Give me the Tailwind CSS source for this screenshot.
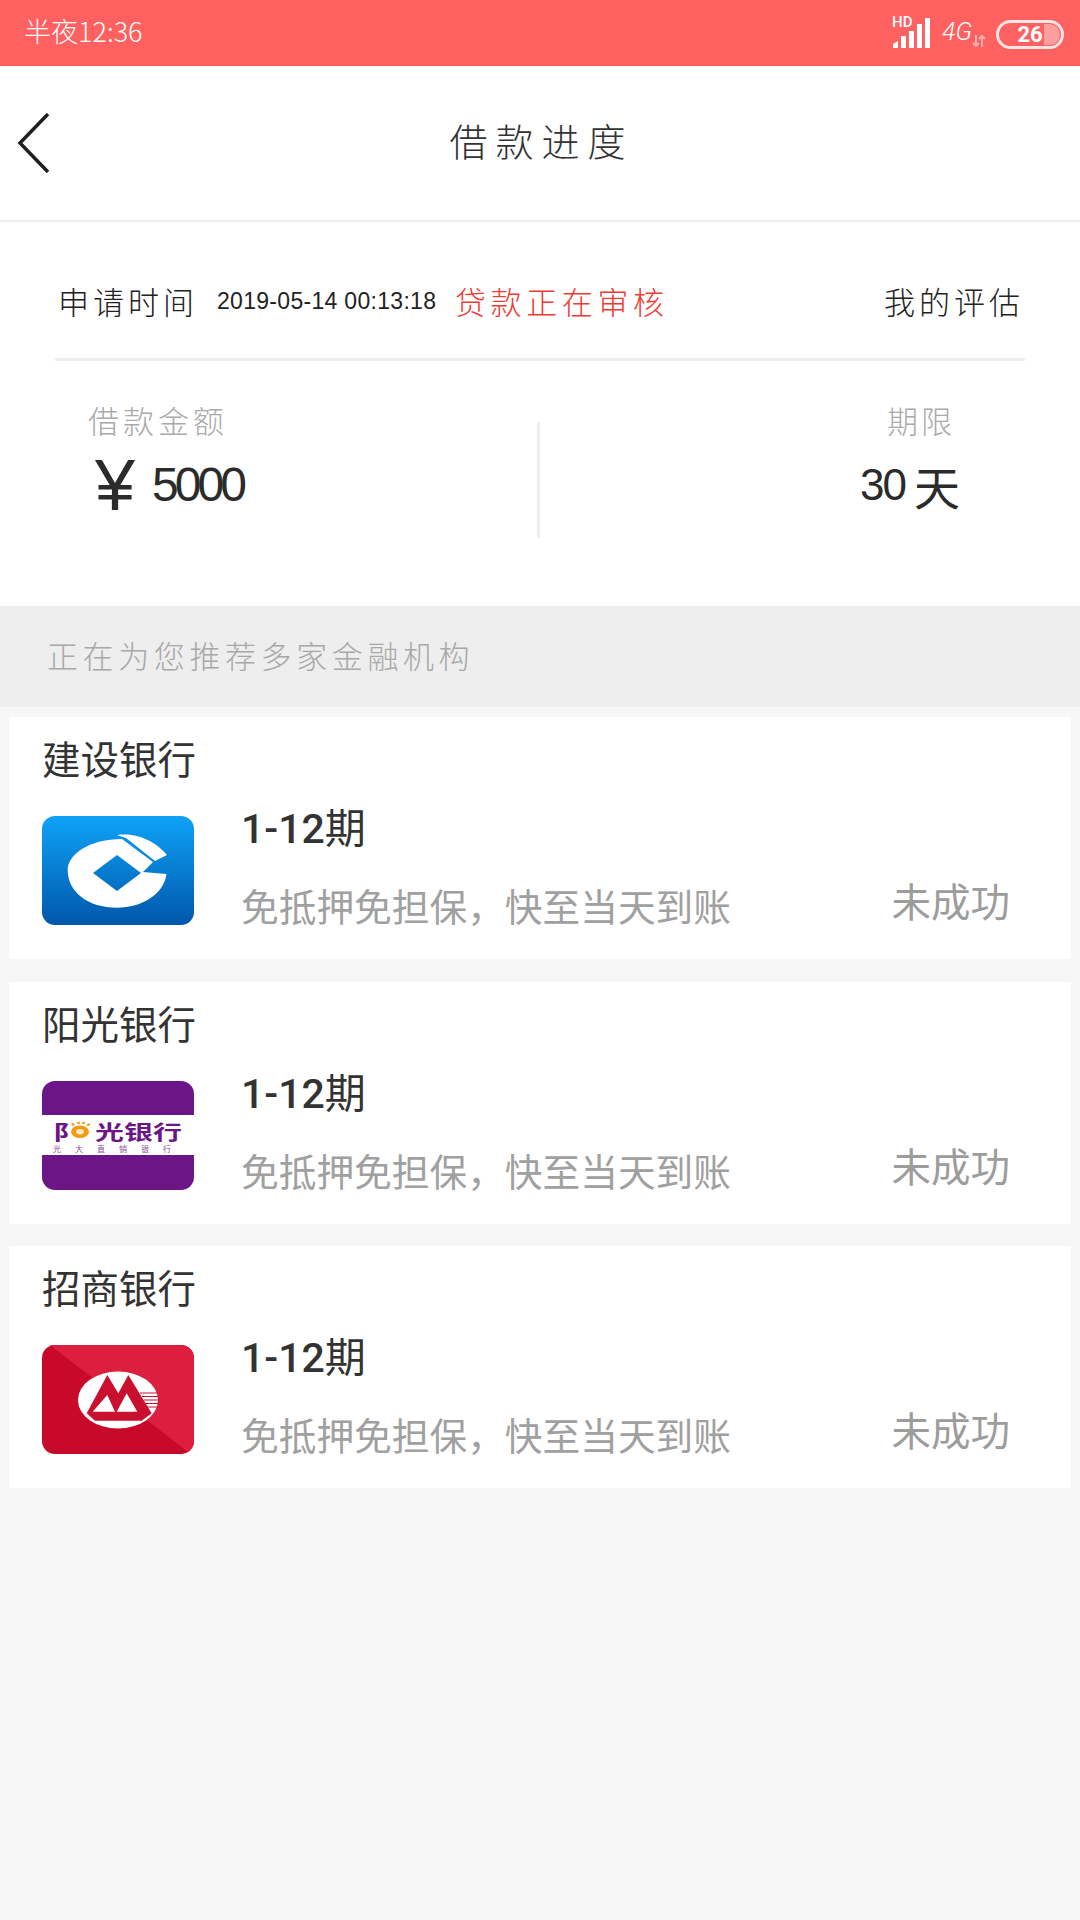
<!DOCTYPE html>
<html lang="zh-CN">
<head>
    <meta charset="UTF-8">
    <meta name="viewport" content="width=device-width, initial-scale=1.0">
    <title>借款进度</title>
    <script src="https://cdn.jsdelivr.net/npm/@tailwindcss/browser@4"></script>
</head>
<body class="bg-[#f6f6f6] font-['Roboto','Noto_Sans_CJK_SC',sans-serif]">
<div class="w-[1080px] h-[1920px] overflow-hidden">
    <!-- Status bar -->
    <div class="h-[66px] bg-[#ff6060] flex items-center pl-[24px] text-white">
        <span class="mt-[-4px] text-[27px] font-light font-['Noto_Sans_CJK_SC',sans-serif]">半夜12:36</span>
        <div class="ml-auto flex items-end h-[66px] pb-[18px]">
            <div class="relative w-[40px] h-[30px]">
                <span class="absolute left-0 top-[-3px] text-[15px] leading-[14px] font-medium">HD</span>
                <svg width="40" height="30" viewBox="0 0 40 30" fill="white">
                    <path d="M1 30V26L6 23V30Z"/><rect x="9" y="18" width="5" height="12"/><rect x="17" y="13" width="5" height="17" /><rect x="25" y="6" width="5" height="24"/><rect x="33" y="0" width="5" height="30"/>
                </svg>
            </div>
            <span class="ml-[10px] w-[30px] text-[25px] leading-[24px] italic font-light mb-[4px]">4G</span>
            <svg class="ml-[1px] mb-[1px] opacity-50" width="12" height="12" viewBox="0 0 12 12" fill="none" stroke="white" stroke-width="2">
                <path d="M3 0V11M0 8L3 11L6 8"/><path d="M9 12V1M6 4L9 1L12 4"/>
            </svg>
            <div class="ml-[11px] mb-[-1px] w-[68px] h-[29px] rounded-full border-[3px] border-[#ffe6e6] relative flex items-center justify-center">
                <span class="text-[22px] font-bold leading-none">26</span>
                <span class="absolute right-[1px] top-[1px] w-[16px] h-[21px] bg-white/40 rounded-r-full"></span>
            </div>
        </div>
        <div class="w-[16px]"></div>
    </div>

    <!-- Header -->
    <div class="h-[156px] bg-white border-b-2 border-[#eeeeee] grid grid-cols-[1fr_auto_1fr] items-center">
        <svg class="ml-[17px]" width="34" height="60" viewBox="0 0 34 60" fill="none" stroke="#1f1f1f" stroke-width="3.5">
            <path d="M31 1L3 30L31 59"/>
        </svg>
        <h1 class="ml-[3px] text-[38px] tracking-[8px] text-[#333333] font-light mt-[-8px] font-['Noto_Sans_CJK_SC',sans-serif]">借款进度</h1>
        <div></div>
    </div>

    <!-- Loan info -->
    <div class="h-[384px] bg-white">
        <div class="mx-[55px] h-[139px] pt-[22px] border-b-[3px] border-[#eeeeee] flex items-center text-[#222222] font-['Noto_Sans_CJK_SC',sans-serif] font-light">
            <span class="ml-[3px] w-[141px] text-[31px] tracking-[4px]">申请时间</span>
            <span class="ml-[18px] w-[238px] text-[23px] font-['Liberation_Sans',sans-serif] tracking-[0.3px]">2019-05-14 00:13:18</span>
            <span class="text-[31px] tracking-[4.6px] text-[#ee3b33]">贷款正在审核</span>
            <span class="ml-auto mr-[1px] text-[31px] tracking-[4px]">我的评估</span>
        </div>
        <div class="flex h-[242px]">
            <div class="w-[537px] pl-[88px]">
                <p class="mt-[37px] h-[44px] leading-[44px] text-[31px] tracking-[4px] text-[#aaaaaa] font-light font-['Noto_Sans_CJK_SC',sans-serif]">借款金额</p>
                <p class="mt-[13px] ml-[7px] flex items-center h-[60px] text-[#2b2b2b] font-['Liberation_Sans',sans-serif]">
                    <span class="text-[72px] leading-[60px]">¥</span>
                    <span class="ml-[17px] text-[48px] leading-[60px] tracking-[-4px]">5000</span>
                </p>
            </div>
            <div class="w-[3px] h-[116px] mt-[61px] bg-[#eeeeee]"></div>
            <div class="flex-1">
                <p class="mt-[37px] ml-[347px] h-[44px] leading-[44px] text-[31px] tracking-[3px] text-[#aaaaaa] font-light font-['Noto_Sans_CJK_SC',sans-serif]">期限</p>
                <p class="mt-[13px] ml-[320px] flex items-center h-[60px] text-[#2b2b2b] font-['Liberation_Sans',sans-serif]">
                    <span class="text-[44px] leading-[60px] tracking-[-2px]">30</span>
                    <span class="ml-[9px] text-[46px] leading-[60px] font-['Noto_Sans_CJK_SC',sans-serif]">天</span>
                </p>
            </div>
        </div>
    </div>

    <!-- Recommendation banner -->
    <div class="h-[101px] bg-[#eeeeee] pl-[47px] leading-[98px] text-[31px] tracking-[4.6px] text-[#a8a8a8] font-light font-['Noto_Sans_CJK_SC',sans-serif]">正在为您推荐多家金融机构</div>

    <!-- Banks -->
    <div class="mt-[10px] mx-[9px] flex flex-col gap-[22.5px]">
        <div class="h-[242px] bg-white">
            <h3 class="h-[85px] pl-[33px] leading-[88px] text-[38.5px] text-[#333333]">建设银行</h3>
            <div class="flex">
                <svg class="mt-[14px] ml-[33px] shrink-0" width="152" height="109" viewBox="0 0 152 109">
                    <defs>
                        <linearGradient id="ccb" x1="0" y1="0" x2="0" y2="1">
                            <stop offset="0" stop-color="#0ea2f7"/>
                            <stop offset="1" stop-color="#0057aa"/>
                        </linearGradient>
                    </defs>
                    <rect width="152" height="109" rx="13" fill="url(#ccb)"/>
                    <path fill="white" fill-rule="evenodd" d="M80 23L111 46L101 56L124.5 58C122 78 100 91.7 75 91.7C46 91.7 25.7 76 25.7 54C25.7 38 48 23 80 23ZM51 57L75 39L99 57L75 75Z"/>
                    <path fill="white" d="M75 19C97 16 115 27 125 39L113 45L84 22Z"/>
                </svg>
                <div class="ml-[47px] flex-1">
                    <p class="mt-[2px] h-[50px] leading-[50px] text-[41px] font-medium text-[#333333]">1-12<span class="font-normal">期</span></p>
                    <p class="mt-[29px] h-[50px] leading-[50px] text-[37.7px] text-[#a0a0a0] whitespace-nowrap">免抵押免担保，快至当天到账</p>
                </div>
                <span class="mt-[77px] mr-[61px] h-[50px] leading-[50px] text-[39.5px] text-[#9c9c9c]">未成功</span>
            </div>
        </div>

        <div class="h-[242px] bg-white">
            <h3 class="h-[85px] pl-[33px] leading-[88px] text-[38.5px] text-[#333333]">阳光银行</h3>
            <div class="flex">
                <div class="mt-[14px] ml-[33px] shrink-0 w-[152px] h-[109px] rounded-[13px] overflow-hidden bg-[#6c1586] flex flex-col justify-center">
                    <div class="h-[40px] bg-white text-[#6c1586] font-bold font-['Noto_Sans_CJK_SC',sans-serif]">
                        <p class="mt-[2px] flex items-center pl-[11px] h-[28px] text-[29px] leading-[28px] whitespace-nowrap scale-y-[0.7]">
                            <span class="w-[17px]">阝</span>
                            <svg width="22" height="28" viewBox="0 0 22 28">
                                <circle cx="10" cy="15" r="9" fill="#f39a12"/>
                                <circle cx="10" cy="15" r="4" fill="#fde9c4"/>
                                <path d="M2 3L4 6M8 1L9 4M14 1L13 4M20 4L17 6" stroke="#f39a12" stroke-width="2.5"/>
                            </svg>
                            <span class="ml-[3px]">光银行</span>
                        </p>
                        <p class="pl-[11px] text-[8px] leading-[8px] tracking-[14px] text-[#8a4a9c] font-normal whitespace-nowrap">光大直销银行</p>
                    </div>
                </div>
                <div class="ml-[47px] flex-1">
                    <p class="mt-[2px] h-[50px] leading-[50px] text-[41px] font-medium text-[#333333]">1-12<span class="font-normal">期</span></p>
                    <p class="mt-[29px] h-[50px] leading-[50px] text-[37.7px] text-[#a0a0a0] whitespace-nowrap">免抵押免担保，快至当天到账</p>
                </div>
                <span class="mt-[77px] mr-[61px] h-[50px] leading-[50px] text-[39.5px] text-[#9c9c9c]">未成功</span>
            </div>
        </div>

        <div class="h-[242px] bg-white">
            <h3 class="h-[85px] pl-[33px] leading-[88px] text-[38.5px] text-[#333333]">招商银行</h3>
            <div class="flex">
                <svg class="mt-[14px] ml-[33px] shrink-0" width="152" height="109" viewBox="0 0 152 109">
                    <rect width="152" height="109" rx="13" fill="#c80a2a"/>
                    <path fill="#dc1f3e" d="M8 0H139A13 13 0 0 1 152 13V96A13 13 0 0 1 146 107Z"/>
                    <ellipse cx="76" cy="55" rx="40" ry="28.5" fill="white"/>
                    <path fill="#c9112f" d="M44.7 68.3L65.3 30L76.3 48.3L86.3 30L109.7 68.3L99.7 75.7H53Z"/>
                    <path fill="white" d="M50.7 66.7L65.3 50L73 66.7ZM74.7 66.7L84.7 48.3L95.3 66.7Z"/>
                    <path stroke="#c9112f" stroke-width="1" d="M98 48H116M100 51.5H116.5M102 55H117M103 58.5H117M104 62H116"/>
                </svg>
                <div class="ml-[47px] flex-1">
                    <p class="mt-[2px] h-[50px] leading-[50px] text-[41px] font-medium text-[#333333]">1-12<span class="font-normal">期</span></p>
                    <p class="mt-[29px] h-[50px] leading-[50px] text-[37.7px] text-[#a0a0a0] whitespace-nowrap">免抵押免担保，快至当天到账</p>
                </div>
                <span class="mt-[77px] mr-[61px] h-[50px] leading-[50px] text-[39.5px] text-[#9c9c9c]">未成功</span>
            </div>
        </div>
    </div>
</div>
</body>
</html>
